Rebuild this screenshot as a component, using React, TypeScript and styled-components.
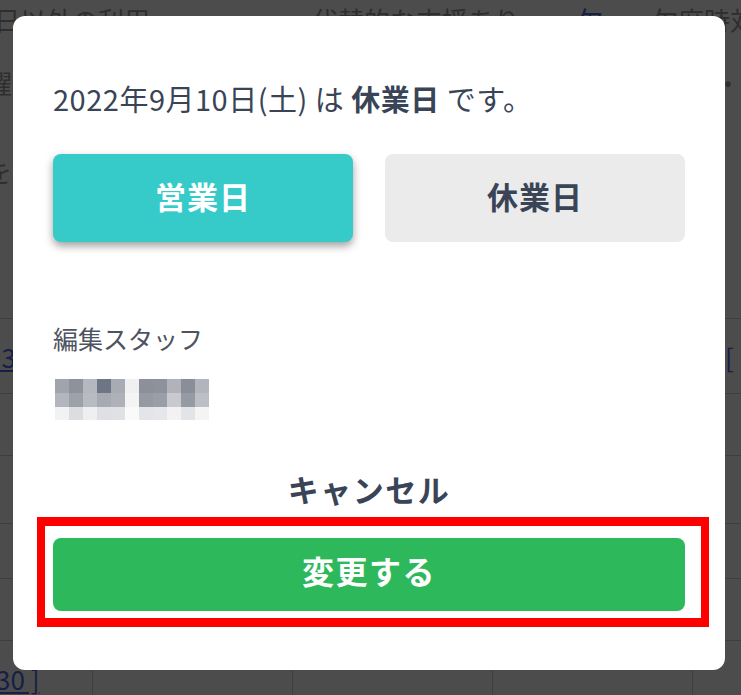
import React from "react";
import styled, { createGlobalStyle, css } from "styled-components";

const GlobalStyle = createGlobalStyle`
  html, body {
    margin: 0;
    padding: 0;
    overflow: hidden;
    background: #ffffff;
  }
  body {
    font-family: "Noto Sans CJK JP", "Noto Sans", sans-serif;
  }
  * {
    box-sizing: border-box;
  }
`;

// mosaic colours for the blurred staff name (3 rows x 11 columns)
const mosaic = [
  ["#a0a4ad", "#8e929d", "#b5b8bf", "#6e7585", "#a8abb4", "#f0f0f2", "#8d909a", "#8e929c", "#b0b3ba", "#8a8e98", "#b2b5bc"],
  ["#b3b6bd", "#9da1aa", "#b8bbc2", "#a6aab2", "#aeb1b8", "#f4f4f5", "#969aa3", "#9a9ea7", "#c8cad0", "#959aa3", "#bcbfc5"],
  ["#f2f2f4", "#dcdde1", "#eeeff1", "#dfe0e3", "#e0e1e4", "#fafafa", "#e4e5e8", "#e6e7ea", "#f2f2f4", "#e3e4e7", "#f4f4f5"],
];

const rows = [75, 62, 68, 55, 62, 80];

const App = () => {
  return (
    <>
      <GlobalStyle />
      <Page>
        <Header>
          <HeadLine>
            <HeadCell $w={209} $shift={-6}>日以外の利用</HeadCell>
            <HeadCell $w={109}>
              <Mark $color="#5570ff">▲</Mark>
              <Mark $color="#999999">/</Mark>
              <Mark $color="#3ddc84">▲</Mark>
            </HeadCell>
            <HeadCell $w={265}>代替的な支援あり</HeadCell>
            <HeadCell $w={75} $link>欠</HeadCell>
            <HeadCell>欠席時対応</HeadCell>
          </HeadLine>
          <SideLine $top={24}>
            <HeadCell $shift={-14}>曜日</HeadCell>
            <HeadCell>・</HeadCell>
          </SideLine>
          <SideLine $top={53}>
            <HeadCell $shift={-14}>をお</HeadCell>
          </SideLine>
        </Header>
        {rows.map((h, i) => (
          <Row key={i} $h={h}>
            <Cell $first>
              {i === 0 && <LinkText $shift={-13}>13(</LinkText>}
              {i === 5 && <LinkText $shift={-40}>10:30 ]</LinkText>}
            </Cell>
            <Cell />
            <Cell />
            <Cell />
            <Cell>{i === 0 && <Bracket>[ 営</Bracket>}</Cell>
          </Row>
        ))}
      </Page>

      <Overlay>
        <Modal>
          <DateLine>
            2022年9月10日(土) は <strong>休業日</strong> です。
          </DateLine>
          <ToggleRow>
            <DayButton $active>営業日</DayButton>
            <DayButton>休業日</DayButton>
          </ToggleRow>
          <StaffLabel>編集スタッフ</StaffLabel>
          <Mosaic>
            {mosaic.map((line, r) =>
              line.map((c, k) => <Tile key={r + "-" + k} $c={c} />)
            )}
          </Mosaic>
          <CancelButton>キャンセル</CancelButton>
          <Highlight>
            <SubmitButton>変更する</SubmitButton>
          </Highlight>
        </Modal>
      </Overlay>
    </>
  );
};

const Page = styled.div`
  width: 741px;
  height: 695px;
  overflow: hidden;
  background: #ffffff;
  color: #999999;
  font-size: 26px;
`;

const Header = styled.div`
  height: 318px;
  padding-top: 2px;
`;

const HeadLine = styled.div`
  display: flex;
  line-height: 36px;
  white-space: nowrap;
`;

const SideLine = styled.div<{ $top: number }>`
  display: flex;
  justify-content: space-between;
  margin-top: ${({ $top }) => $top}px;
  line-height: 36px;
  white-space: nowrap;
`;

const HeadCell = styled.span<{ $w?: number; $shift?: number; $link?: boolean }>`
  flex: ${({ $w }) => ($w ? `0 0 ${$w}px` : "0 0 auto")};
  margin-left: ${({ $shift }) => $shift || 0}px;
  ${({ $link }) =>
    $link &&
    css`
      color: #4a68e8;
    `}
`;

const Mark = styled.span<{ $color: string }>`
  color: ${({ $color }) => $color};
  font-size: 18px;
  margin-right: 4px;
`;

const Row = styled.div<{ $h: number }>`
  display: grid;
  grid-template-columns: 92px 200px 200px 200px 1fr;
  height: ${({ $h }) => $h}px;
  border-top: 1px solid #d0d0d0;
`;

const Cell = styled.div<{ $first?: boolean }>`
  border-left: ${({ $first }) => ($first ? "none" : "1px solid #d0d0d0")};
  padding-top: 20px;
  line-height: 36px;
  white-space: nowrap;
  overflow: visible;
`;

const LinkText = styled.span<{ $shift: number }>`
  display: inline-block;
  margin-left: ${({ $shift }) => $shift}px;
  color: #4a68e8;
  text-decoration: underline;
`;

const Bracket = styled.span`
  display: inline-block;
  margin-left: 32px;
  color: #4a68e8;
`;

const Overlay = styled.div`
  position: fixed;
  inset: 0;
  background: rgba(0, 0, 0, 0.7);
  padding: 16px 0 0 13px;
`;

const Modal = styled.div`
  width: 712px;
  background: #ffffff;
  border-radius: 12px;
  padding: 62px 40px 43px;
  display: flex;
  flex-direction: column;
`;

const DateLine = styled.div`
  font-size: 29px;
  letter-spacing: 0.5px;
  line-height: 40px;
  color: #3a4457;
  white-space: nowrap;

  strong {
    font-weight: 700;
  }
`;

const ToggleRow = styled.div`
  display: grid;
  grid-template-columns: 1fr 1fr;
  gap: 32px;
  margin-top: 36px;
`;

const DayButton = styled.button<{ $active?: boolean }>`
  height: 88px;
  border: none;
  border-radius: 8px;
  padding: 0 0 6px;
  font-family: inherit;
  font-size: 31px;
  letter-spacing: 1px;
  font-weight: 700;
  background: #ebebeb;
  color: #3a4457;
  cursor: pointer;

  ${({ $active }) =>
    $active &&
    css`
      background: #36cbc9;
      color: #ffffff;
      box-shadow: 0 4px 8px rgba(0, 0, 0, 0.38);
    `}
`;

const StaffLabel = styled.div`
  margin-top: 78px;
  font-size: 25px;
  line-height: 36px;
  color: #4d5360;
`;

const Mosaic = styled.div`
  display: grid;
  grid-template-columns: repeat(11, 14px);
  grid-template-rows: 14px 14px 13px;
  margin: 23px 0 0 2px;
`;

const Tile = styled.div<{ $c: string }>`
  background: ${({ $c }) => $c};
`;

const CancelButton = styled.button`
  margin-top: 49px;
  border: none;
  background: none;
  padding: 0 0 2px;
  font-family: inherit;
  font-size: 31px;
  letter-spacing: 1.5px;
  font-weight: 700;
  line-height: 40px;
  color: #3a4457;
  cursor: pointer;
`;

const Highlight = styled.div`
  margin: 6px -24px 0 -16px;
  border: solid #ff0000;
  border-width: 9px 8px;
  padding: 12px 16px 7px 8px;
`;

const SubmitButton = styled.button`
  width: 100%;
  height: 73px;
  border: none;
  border-radius: 8px;
  padding: 0 0 9px;
  background: #2eb85c;
  color: #ffffff;
  font-family: inherit;
  font-size: 32px;
  letter-spacing: 1.5px;
  font-weight: 700;
  cursor: pointer;
`;

export default App;
